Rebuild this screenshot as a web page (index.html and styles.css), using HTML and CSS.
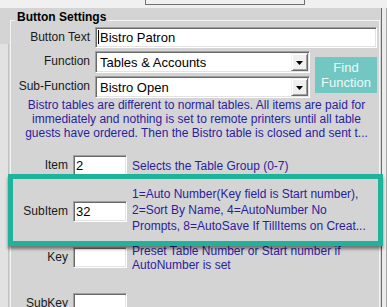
FILE: index.html
```html
<!DOCTYPE html>
<html>
<head>
<meta charset="utf-8">
<link rel="stylesheet" href="styles.css">
</head>
<body>
<div class="top"><div class="topbox"></div></div>
<div class="main">
  <div class="panel">
    <div class="lstrip"></div>
    <div class="group">
      <div class="group-title">Button Settings</div>
      <div class="form">
        <div class="lbl">Button Text</div>
        <div class="tb tb-wide"><span class="caret"></span>Bistro Patron</div>
        <div class="lbl">Function</div>
        <div class="combo"><span class="combo-val">Tables &amp; Accounts</span><span class="combo-btn"><svg width="7" height="4" viewBox="0 0 7 4"><path d="M0 0H7L3.5 4Z" fill="#000"/></svg></span></div>
        <div class="find"><span>Find</span><span>Function</span></div>
        <div class="lbl">Sub-Function</div>
        <div class="combo"><span class="combo-val">Bistro Open</span><span class="combo-btn"><svg width="7" height="4" viewBox="0 0 7 4"><path d="M0 0H7L3.5 4Z" fill="#000"/></svg></span></div>
      </div>
      <div class="desc">
        <div>Bistro tables are different to normal tables. All items are paid for</div>
        <div>immediately and nothing is set to remote printers until all table</div>
        <div>guests have ordered. Then the Bistro table is closed and sent t...</div>
      </div>
      <div class="rows">
        <div class="row">
          <div class="rlbl">Item</div>
          <div class="tb tb-small">2</div>
          <div class="hint">Selects the Table Group (0-7)</div>
        </div>
        <div class="row">
          <div class="rlbl">SubItem</div>
          <div class="tb tb-small">32</div>
          <div class="hint hint-3">1=Auto Number(Key field is Start number),<br>2=Sort By Name, 4=AutoNumber No<br>Prompts, 8=AutoSave If TillItems on Creat...</div>
        </div>
        <div class="row">
          <div class="rlbl">Key</div>
          <div class="tb tb-small"></div>
          <div class="hint">Preset Table Number or Start number if<br>AutoNumber is set</div>
        </div>
        <div class="row">
          <div class="rlbl">SubKey</div>
          <div class="tb tb-small"></div>
        </div>
      </div>
    </div>
  </div>
  <div class="rstrip"></div>
</div>
<div class="highlight"></div>
</body>
</html>
```
FILE: styles.css
```css
body {
  margin: 0;
  width: 387px;
  height: 307px;
  overflow: hidden;
  position: relative;
  background: #f0f0f0;
  font-family: "Liberation Sans", Arial, sans-serif;
  color: #1a1a1a;
}
.top {
  height: 8px;
}
.topbox {
  margin-left: 145px;
  width: 158px;
  height: 4px;
  border: 1px solid #707070;
  border-top: none;
}
.main {
  display: flex;
  height: 299px;
}
.panel {
  width: 381px;
  background: #d4d4d4;
  display: flex;
  align-items: flex-start;
  overflow: hidden;
}
.lstrip {
  width: 8px;
  height: 270px;
  margin-top: 36px;
  background: #e2e2e2;
  border-right: 1px solid #c2c2c2;
  flex: none;
}
.rstrip {
  width: 4px;
  background: #ececec;
  border-left: 1px solid #6a6a6a;
  border-right: 1px solid #a8a8a8;
}
.group {
  margin-top: 12px;
  margin-left: 1px;
  width: 368px;
  height: 320px;
  border: 1px solid #f4f4f4;
  border-bottom: none;
  flex: none;
}
.group-title {
  width: fit-content;
  margin: -11px 0 0 4px;
  padding: 0 2px;
  background: #d4d4d4;
  font-weight: bold;
  font-size: 12px;
  line-height: 14px;
  color: #000;
}
.form {
  margin-top: 3px;
  display: grid;
  grid-template-columns: 79px 215px 62px;
  grid-template-rows: 21px 22px 22px;
  column-gap: 5px;
  row-gap: 3px;
}
.lbl {
  text-align: right;
  font-size: 12px;
  line-height: 21px;
  white-space: nowrap;
}
.tb {
  box-sizing: border-box;
  background: #fff;
  border-top: 1px solid #a0a0a0;
  border-left: 1px solid #a0a0a0;
  border-right: 1px solid #fff;
  border-bottom: 1px solid #fff;
  box-shadow: inset 1px 1px 0 #696969, inset -1px -1px 0 #e3e3e3;
  font-size: 13px;
  line-height: 19px;
  padding-left: 2px;
  color: #000;
  white-space: nowrap;
  overflow: hidden;
}
.tb-wide {
  grid-column: 2 / 4;
}
.caret {
  display: inline-block;
  width: 1px;
  height: 14px;
  background: #000;
  vertical-align: -2px;
  margin-right: 1px;
}
.combo {
  box-sizing: border-box;
  display: flex;
  align-items: center;
  background: #fff;
  border-top: 1px solid #a0a0a0;
  border-left: 1px solid #a0a0a0;
  border-right: 1px solid #fff;
  border-bottom: 1px solid #fff;
  box-shadow: inset 1px 1px 0 #696969, inset -1px -1px 0 #e3e3e3;
  padding: 1px;
}
.combo-val {
  flex: 1;
  font-size: 13px;
  padding-left: 3px;
  color: #000;
  white-space: nowrap;
}
.combo-btn {
  box-sizing: border-box;
  width: 17px;
  height: 18px;
  display: flex;
  align-items: center;
  justify-content: center;
  background: #f0f0f0;
  border-top: 1px solid #f0f0f0;
  border-left: 1px solid #f0f0f0;
  border-right: 1px solid #696969;
  border-bottom: 1px solid #696969;
  box-shadow: inset 1px 1px 0 #fff, inset -1px -1px 0 #a0a0a0;
  padding-top: 1px;
}
.find {
  grid-column: 3;
  grid-row: 2 / 4;
  align-self: center;
  height: 36px;
  background: #72c7c3;
  color: #eef9f8;
  font-size: 13px;
  line-height: 15px;
  display: flex;
  flex-direction: column;
  align-items: center;
  justify-content: center;
}
.desc {
  padding-left: 3px;
  text-align: center;
  font-size: 12px;
  line-height: 14px;
  color: #2b1d9f;
  white-space: nowrap;
}
.rows {
  margin-top: 15px;
  display: flex;
  flex-direction: column;
  gap: 25px;
}
.row {
  display: flex;
  align-items: center;
  height: 21px;
  gap: 5px;
}
.rlbl {
  width: 57px;
  text-align: right;
  font-size: 12px;
  line-height: 14px;
  padding-bottom: 2px;
}
.tb-small {
  width: 54px;
  height: 21px;
}
.hint {
  font-size: 12px;
  line-height: 14px;
  color: #2b1d9f;
  white-space: nowrap;
}
.hint-3 {
  line-height: 16px;
  margin-bottom: 3px;
}
.highlight {
  position: absolute;
  left: 8px;
  top: 174px;
  width: 375px;
  height: 72px;
  box-sizing: border-box;
  border: 5px solid #1fb39c;
  box-shadow: 0 3px 3px rgba(0, 0, 0, 0.45);
}
```
